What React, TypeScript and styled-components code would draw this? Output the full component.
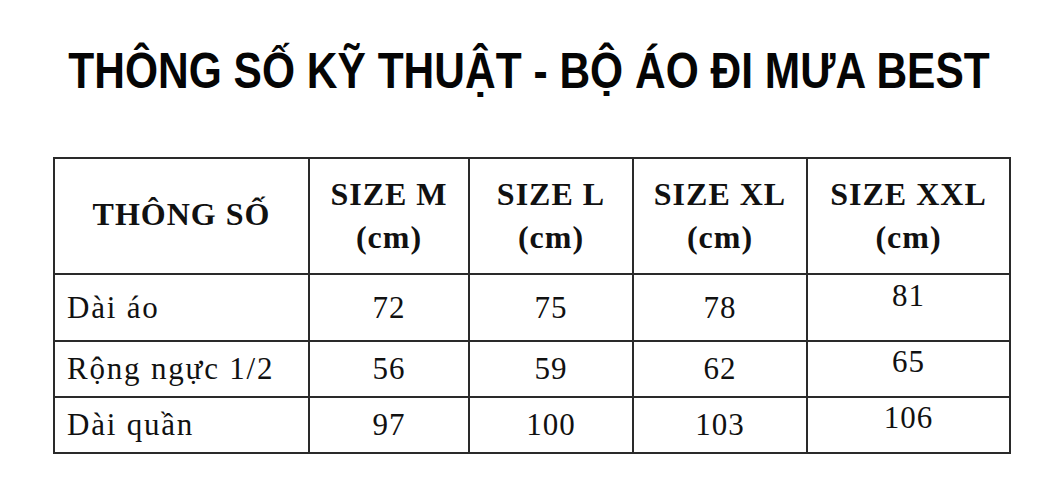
import React from 'react';
import styled, { createGlobalStyle } from 'styled-components';

const GlobalStyle = createGlobalStyle`
  html, body {
    margin: 0;
    padding: 0;
    background: #ffffff;
  }
`;

const Page = styled.div`
  width: 1058px;
  height: 500px;
  background: #ffffff;
  overflow: hidden;
`;

const TitleRow = styled.div`
  padding-top: 46px;
  height: 50px;
  display: flex;
  justify-content: center;
`;

const Title = styled.h1`
  margin: 0;
  font-family: 'Liberation Sans', Arial, sans-serif;
  font-weight: 700;
  font-size: 50px;
  line-height: 50px;
  color: #050505;
  white-space: nowrap;
  transform: scaleX(0.85);
`;

const Table = styled.table`
  margin: 61px 0 0 53px;
  width: 956px;
  border-collapse: collapse;
  table-layout: fixed;
  font-family: 'Liberation Serif', 'Times New Roman', serif;
  color: #111111;
`;

const HeadCell = styled.th<{ $label?: boolean }>`
  border: 2px solid #2a2a2a;
  height: ${(p) => (p.$label ? '110px' : '114px')};
  padding: 0 0 ${(p) => (p.$label ? '4px' : '0')};
  font-size: 32px;
  font-weight: 700;
  letter-spacing: 1px;
  line-height: 43px;
  text-align: center;
  vertical-align: middle;
`;

// $lift pushes the value up from the row centre (the XXL column sits higher)
const Cell = styled.td<{ $label?: boolean; $h: number; $lift?: number }>`
  border: 2px solid #2a2a2a;
  height: ${(p) => p.$h - (p.$lift ?? 0)}px;
  padding: 0 0 ${(p) => p.$lift ?? 0}px ${(p) => (p.$label ? '12px' : '0')};
  font-size: 31px;
  font-weight: 400;
  letter-spacing: ${(p) => (p.$label ? '1.8px' : '1px')};
  line-height: 34px;
  text-align: ${(p) => (p.$label ? 'left' : 'center')};
  vertical-align: middle;
  white-space: nowrap;
`;

const columns = [255, 160, 164, 174, 203];
const sizes = ['SIZE M', 'SIZE L', 'SIZE XL', 'SIZE XXL'];

const rows = [
  { label: 'Dài áo', values: ['72', '75', '78', '81'], h: 65, lift: 23 },
  { label: 'Rộng ngực 1/2', values: ['56', '59', '62', '65'], h: 54, lift: 14 },
  { label: 'Dài quần', values: ['97', '100', '103', '106'], h: 54, lift: 14 },
];

export default function App() {
  return (
    <Page>
      <GlobalStyle />
      <TitleRow>
        <Title>THÔNG SỐ KỸ THUẬT - BỘ ÁO ĐI MƯA BEST</Title>
      </TitleRow>
      <Table>
        <colgroup>
          {columns.map((w, i) => (
            <col key={i} style={{ width: w }} />
          ))}
        </colgroup>
        <thead>
          <tr>
            <HeadCell $label>THÔNG SỐ</HeadCell>
            {sizes.map((s) => (
              <HeadCell key={s}>
                {s}
                <br />
                (cm)
              </HeadCell>
            ))}
          </tr>
        </thead>
        <tbody>
          {rows.map((r) => (
            <tr key={r.label}>
              <Cell $label $h={r.h}>
                {r.label}
              </Cell>
              {r.values.map((v, i) => (
                <Cell key={i} $h={r.h} $lift={i === 3 ? r.lift : 0}>
                  {v}
                </Cell>
              ))}
            </tr>
          ))}
        </tbody>
      </Table>
    </Page>
  );
}
